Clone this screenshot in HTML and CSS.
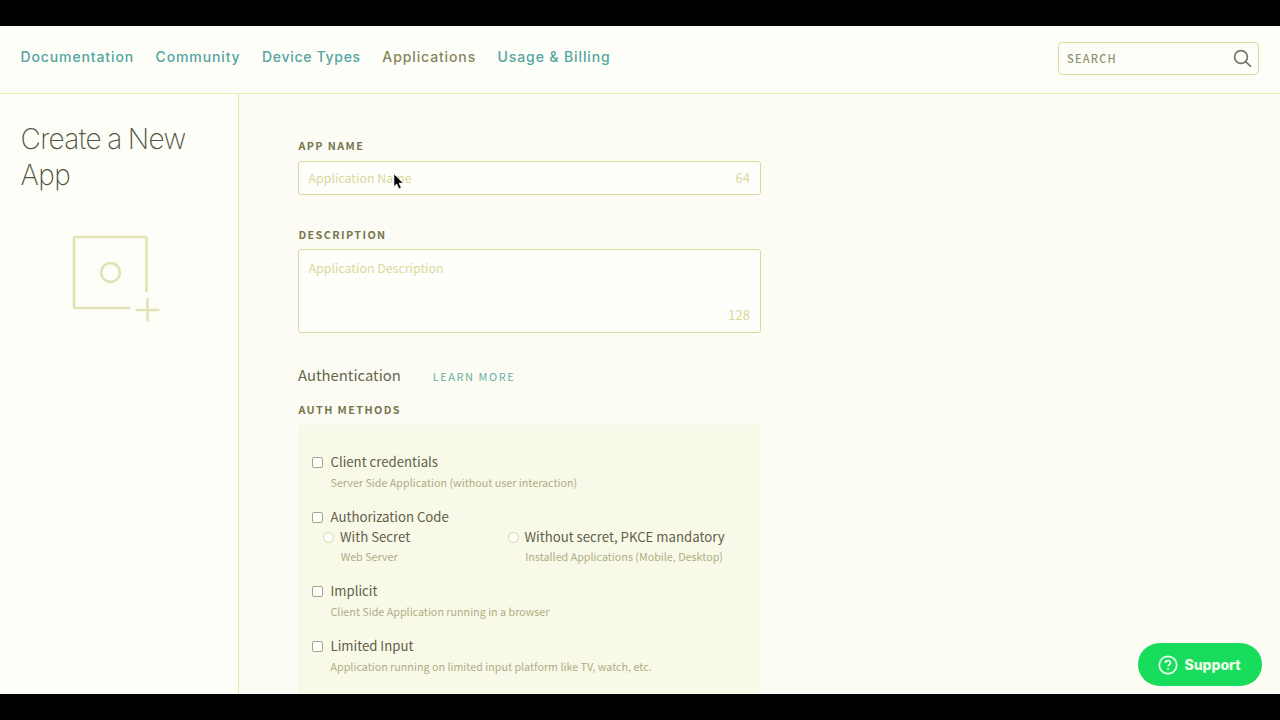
FILE: index.html
```html
<!DOCTYPE html>
<html lang="en">
<head>
<meta charset="utf-8">
<title>Create a New App</title>
<link rel="stylesheet" href="styles.css">
</head>
<body>
<div class="page">
  <header class="topbar">
    <nav class="nav">
      <a class="n1">Documentation</a>
      <a class="n2">Community</a>
      <a class="n3">Device Types</a>
      <a class="n4 current">Applications</a>
      <a class="n5">Usage &amp; Billing</a>
    </nav>
    <div class="search">
      <span>SEARCH</span>
      <svg width="20" height="20" viewBox="0 0 20 20" fill="none" stroke="#77776a" stroke-width="1.7"><circle cx="8" cy="8" r="6.4"/><path d="M12.6 12.6 18 17.6"/></svg>
    </div>
  </header>
  <div class="body">
    <aside class="sidebar">
      <h1>Create a New App</h1>
      <svg class="app-icon" width="90" height="90" viewBox="0 0 90 90" fill="none" stroke="#e2e2b4" stroke-width="2.6"><path d="M59 74H4a1 1 0 0 1-1-1V4a1 1 0 0 1 1-1H74.500a1 1 0 0 1 1 1V58"/><circle cx="39.500" cy="38.500" r="9.400"/><path d="M64.500 76H88.500M76.500 64V87.500"/></svg>
    </aside>
    <main class="main">
      <label class="label">APP NAME</label>
      <div class="field name-field"><span class="ph">Application Name</span><span class="count">64</span></div>
      <label class="label">DESCRIPTION</label>
      <div class="field desc-field"><span class="ph desc">Application Description</span><span class="count">128</span></div>
      <div class="auth-head"><h2>Authentication</h2><a>LEARN MORE</a></div>
      <label class="label">AUTH METHODS</label>
      <section class="panel">
        <div class="method"><i class="box"></i><div><p class="title">Client credentials</p><p class="hint">Server Side Application (without user interaction)</p></div></div>
        <div class="method with-options"><i class="box"></i><div><p class="title">Authorization Code</p></div></div>
        <div class="options">
          <div class="option"><i class="radio"></i><div><p class="title">With Secret</p><p class="hint">Web Server</p></div></div>
          <div class="option"><i class="radio"></i><div><p class="title">Without secret, PKCE mandatory</p><p class="hint">Installed Applications (Mobile, Desktop)</p></div></div>
        </div>
        <div class="method"><i class="box"></i><div><p class="title">Implicit</p><p class="hint">Client Side Application running in a browser</p></div></div>
        <div class="method"><i class="box"></i><div><p class="title">Limited Input</p><p class="hint">Application running on limited input platform like TV, watch, etc.</p></div></div>
      </section>
    </main>
  </div>
  <svg class="cursor" width="14" height="19" viewBox="0 0 14 19"><path d="M1 1v12.500l2.800-2.600 2.100 4.800 2.200-1-2.100-4.600H10z" fill="#000" stroke="#eee" stroke-width=".6"/></svg>
  <button class="support">
    <svg width="20" height="20" viewBox="0 0 20 20" fill="none" stroke="#e9fff0" stroke-width="1.700"><circle cx="10" cy="10" r="8.700"/><path d="M7.500 8.100c0-1.500 1.100-2.400 2.500-2.400s2.500.9 2.500 2.200c0 1.700-2.400 1.700-2.400 3.700M10.100 12.900v1.800"/></svg>
    <span>Support</span>
  </button>
</div>
</body>
</html>
```
FILE: styles.css
```css
* { box-sizing: border-box; }
body {
  margin: 0;
  height: 720px;
  padding: 26px 0;
  background: #000;
  overflow: hidden;
  font-family: "Noto Sans CJK SC", "Open Sans", sans-serif;
  color: #62625a;
}
h1, h2, p { margin: 0; font-weight: 400; }
.page {
  position: relative;
  height: 668px;
  overflow: hidden;
  display: flex;
  flex-direction: column;
  background: #fefef9;
}
.topbar {
  flex: none;
  height: 68px;
  padding: 0 21px 3px 20.5px;
  border-bottom: 1px solid #ececae;
  display: flex;
  align-items: center;
  justify-content: space-between;
}
.nav {
  display: flex;
  gap: 21.5px;
  font: 500 14px/20px Inter, sans-serif;
  letter-spacing: 0.88px;
  color: #52a5a0;
  white-space: nowrap;
  padding-bottom: 2px;
}
.nav .n3 { letter-spacing: 0.7px; }
.nav .current { color: #85855a; }
.search {
  width: 201px;
  height: 33px;
  padding: 0 5px 0 8px;
  border: 1px solid #dcdc9e;
  border-radius: 4px;
  display: flex;
  align-items: center;
  justify-content: space-between;
  font-size: 11px;
  font-weight: 500;
  letter-spacing: 1.2px;
  color: #909070;
}
.search svg { margin-top: 2px; }
.body { flex: 1; display: flex; min-height: 0; }
.sidebar {
  width: 239px;
  flex: none;
  border-right: 1px solid #e9e9b4;
  padding: 27px 20px;
}
h1 {
  font: 200 28px/36px Inter, sans-serif;
  letter-spacing: -0.65px;
  word-spacing: -1px;
  padding-left: 0.5px;
  color: #55553e;
}
.app-icon { display: block; margin: 41px 0 0 51px; }
.main {
  flex: 1;
  background: #fcfcf5;
  padding: 42px 0 0 59px;
}
.label {
  display: block;
  font-size: 10.8px;
  font-weight: 700;
  line-height: 18px;
  letter-spacing: 1.4px;
  padding-left: 0.4px;
  color: #77774e;
}
.field {
  width: 463px;
  border: 1px solid #d9d9a0;
  border-radius: 3px;
  background: #fefefb;
  padding: 0 10px 0 9.5px;
  display: flex;
  justify-content: space-between;
  font-size: 12.4px;
  line-height: 20px;
  color: #d9d99c;
}
.count { font-size: 13px; }
.name-field { height: 34px; margin: 7px 0 30px; align-items: center; }
.desc-field { height: 84px; margin: 6px 0 30px; padding-top: 8px; padding-bottom: 7px; }
.desc-field .count { align-self: flex-end; }
.auth-head { display: flex; align-items: center; height: 24px; gap: 32px; margin-bottom: 13px; }
.auth-head h2 { font-size: 14.85px; line-height: 24px; color: #66664c; }
.auth-head a { font-size: 11px; line-height: 20px; padding-top: 1px; letter-spacing: 1.55px; color: #68b0a3; }
.panel {
  width: 463px;
  height: 280px;
  margin-top: 7px;
  padding: 27px 0 0 14px;
  background: #f9f9ea;
}
.method { display: flex; gap: 7.5px; height: 55.2px; }
.method.with-options { height: 20px; }
.title { font-size: 13.2px; line-height: 20px; color: #606046; white-space: nowrap; }
.hint { font-size: 10.75px; line-height: 20px; margin-top: 1px; color: #aeae80; white-space: nowrap; }
.box { flex: none; width: 11px; height: 11px; margin-top: 5px; border: 1px solid #a5a588; border-radius: 2px; background: #fefefb; }
.options { display: flex; height: 54px; padding-left: 11px; }
.option { display: flex; gap: 6px; width: 184.500px; }
.option .hint { margin-top: 0; padding-left: 0.7px; }
.radio { flex: none; width: 11px; height: 11px; margin-top: 5px; border: 1px solid #d8d8aa; border-radius: 50%; background: #fefefb; }
.cursor { position: absolute; left: 393px; top: 147px; }
.support {
  position: absolute;
  right: 18.5px;
  bottom: 8px;
  width: 124px;
  height: 43px;
  border: 0;
  border-radius: 22px;
  background: #17dc5c;
  padding: 0;
  display: flex;
  align-items: center;
  justify-content: center;
  gap: 6px;
  font: 800 14px/20px Inter, sans-serif;
  color: #efffe9;
}
```
